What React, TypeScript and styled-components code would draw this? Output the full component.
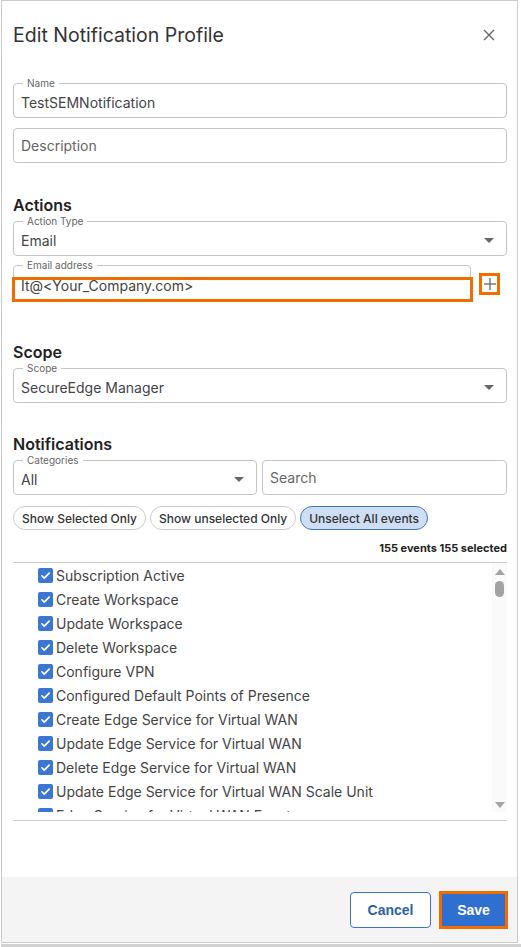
import React from 'react';
import styled, { createGlobalStyle } from 'styled-components';

const GlobalStyle = createGlobalStyle`
  * { box-sizing: border-box; }
  body {
    margin: 0;
    background: #fff;
    font-family: Inter, "Noto Sans", sans-serif;
    color: #333;
  }
`;

const Page = styled.div`
  width: 521px;
  padding-left: 1px;
`;

const Panel = styled.div`
  width: 517px;
  height: 943px;
  border: 1px solid #cbcbcb;
  display: flex;
  flex-direction: column;
  background: #fff;
`;

const BottomStrip = styled.div`
  margin-top: 1px;
  height: 3px;
  width: 520px;
  background: #d2d2d2;
`;

const Body = styled.div`
  flex: 1;
  padding: 0 10px 0 11px;
  display: flex;
  flex-direction: column;
`;

const Header = styled.div`
  display: flex;
  align-items: center;
  justify-content: space-between;
  padding-top: 22px;
  height: 46px;
`;

const Title = styled.h1`
  margin: 0;
  font-size: 19.5px;
  line-height: 24px;
  font-weight: 400;
  color: #333;
`;

const CloseButton = styled.button`
  width: 24px;
  height: 24px;
  margin-right: 6px;
  border: none;
  background: none;
  padding: 0;
  display: flex;
  align-items: center;
  justify-content: center;
  color: #666;
`;

const Fieldset = styled.fieldset<{ $mt?: number; $grow?: boolean; $width?: string }>`
  position: relative;
  margin: ${({ $mt }) => $mt ?? 0}px 0 0;
  padding: 0 7px;
  border: 1px solid #c4c4c4;
  border-radius: 4px;
  min-width: 0;
  display: flex;
  align-items: center;
  flex: ${({ $grow, $width }) => ($width ? `0 0 ${$width}` : $grow ? '1 1 0' : '0 0 auto')};
`;

const Legend = styled.legend`
  margin-left: 2px;
  padding: 0 4px;
  font-size: 10px;
  line-height: 10px;
  color: #666;
`;

const Input = styled.input<{ $h?: number }>`
  flex: 1;
  min-width: 0;
  height: ${({ $h }) => $h ?? 29}px;
  border: none;
  outline: none;
  padding: 0;
  background: transparent;
  font-family: inherit;
  font-size: 14px;
  color: #444;
  &::placeholder { color: #666; }
`;

const PlainBox = styled.div<{ $mt?: number; $grow?: boolean }>`
  margin-top: ${({ $mt }) => $mt ?? 0}px;
  height: 35px;
  flex: ${({ $grow }) => ($grow ? '1 1 0' : '0 0 auto')};
  border: 1px solid #c4c4c4;
  border-radius: 4px;
  padding: 0 7px;
  display: flex;
  align-items: center;
`;

const Caret = styled.span`
  width: 0;
  height: 0;
  margin-right: 5px;
  border-left: 5px solid transparent;
  border-right: 5px solid transparent;
  border-top: 5px solid #666;
`;

const SectionTitle = styled.h2<{ $mt: number }>`
  margin: ${({ $mt }) => $mt}px 0 0;
  font-size: 16px;
  line-height: 22px;
  font-weight: 600;
  color: #222;
`;

const Row = styled.div<{ $mt?: number; $gap?: number }>`
  display: flex;
  align-items: flex-end;
  gap: ${({ $gap }) => $gap ?? 0}px;
  margin-top: ${({ $mt }) => $mt ?? 0}px;
`;

const Highlight = styled.span`
  position: absolute;
  left: -2px;
  right: -3px;
  top: 7px;
  bottom: -2px;
  border: 3px solid #f36c00;
  pointer-events: none;
`;

const PlusButton = styled.button`
  width: 21px;
  height: 22px;
  margin: 0 7px 6px 8px;
  padding: 0;
  border: 3px solid #f36c00;
  background: #fff;
  display: flex;
  align-items: center;
  justify-content: center;
  color: #777;
`;

const ChipRow = styled.div`
  display: flex;
  gap: 4px;
  margin-top: 11px;
`;

const Chip = styled.button<{ $active?: boolean }>`
  height: 24px;
  padding: 0 8px;
  border-radius: 12px;
  border: 1px solid ${({ $active }) => ($active ? '#3f78c9' : '#cdcdcd')};
  background: ${({ $active }) => ($active ? '#cddef5' : '#fff')};
  font-family: inherit;
  font-size: 12px;
  font-weight: 500;
  color: #333;
  white-space: nowrap;
`;

const Count = styled.div`
  margin-top: 11px;
  text-align: right;
  font-size: 11px;
  line-height: 14px;
  font-weight: 700;
  color: #222;
`;

const ListBox = styled.div`
  margin-top: 7px;
  border-top: 1px solid #cccccc;
  border-bottom: 1px solid #cccccc;
  padding-bottom: 8px;
  display: flex;
`;

const ListScroll = styled.div`
  flex: 1;
  height: 249px;
  overflow: hidden;
  padding-left: 25px;
`;

const Item = styled.label`
  display: flex;
  align-items: center;
  height: 24px;
  font-size: 14px;
  color: #444;
  white-space: nowrap;
`;

const Check = styled.span`
  width: 15px;
  height: 15px;
  margin-right: 3px;
  border-radius: 2px;
  background: #3a76d2;
  display: flex;
  align-items: center;
  justify-content: center;
  flex: none;
`;

const ScrollTrack = styled.div`
  width: 15px;
  height: 249px;
  background: #fafafa;
  display: flex;
  flex-direction: column;
  align-items: center;
  padding: 6px 0 4px;
`;

const Thumb = styled.div`
  width: 9px;
  height: 16px;
  margin-top: 6px;
  border-radius: 5px;
  background: #a3a3a3;
`;

const TrackSpacer = styled.div`
  flex: 1;
`;

const Arrow = styled.span<{ $down?: boolean }>`
  width: 0;
  height: 0;
  border-left: 5px solid transparent;
  border-right: 5px solid transparent;
  ${({ $down }) =>
    $down ? 'border-top: 6px solid #a3a3a3;' : 'border-bottom: 6px solid #a3a3a3;'}
`;

const Footer = styled.div`
  height: 65px;
  background: #f4f4f4;
  display: flex;
  align-items: center;
  justify-content: flex-end;
  gap: 8px;
  padding-right: 9px;
`;

const CancelButton = styled.button`
  width: 81px;
  height: 36px;
  border: 1px solid #3a73c9;
  border-radius: 4px;
  background: #fff;
  font-family: "Liberation Sans", Arial, sans-serif;
  font-size: 14px;
  font-weight: 700;
  color: #2f5fa6;
`;

const SaveButton = styled.button`
  width: 69px;
  height: 38px;
  border: 3px solid #f36c00;
  background: #2f6fcf;
  font-family: "Liberation Sans", Arial, sans-serif;
  font-size: 14px;
  font-weight: 700;
  color: #fff;
`;

const events = [
  'Subscription Active',
  'Create Workspace',
  'Update Workspace',
  'Delete Workspace',
  'Configure VPN',
  'Configured Default Points of Presence',
  'Create Edge Service for Virtual WAN',
  'Update Edge Service for Virtual WAN',
  'Delete Edge Service for Virtual WAN',
  'Update Edge Service for Virtual WAN Scale Unit',
  'Edge Service for Virtual WAN Event',
  'Create Site',
];

const CheckIcon = () => (
  <svg width="11" height="11" viewBox="0 0 12 12" fill="none">
    <path d="M2 6.3l2.6 2.6L10 3.4" stroke="#fff" strokeWidth="1.8" strokeLinecap="round" strokeLinejoin="round" />
  </svg>
);

const App: React.FC = () => {
  return (
    <Page>
      <GlobalStyle />
      <Panel>
        <Body>
          <Header>
            <Title>Edit Notification Profile</Title>
            <CloseButton aria-label="Close">
              <svg width="12" height="12" viewBox="0 0 12 12">
                <path d="M1 1l10 10M11 1L1 11" stroke="#666" strokeWidth="1.4" />
              </svg>
            </CloseButton>
          </Header>

          <Fieldset $mt={31}>
            <Legend>Name</Legend>
            <Input defaultValue="TestSEMNotification" />
          </Fieldset>
          <PlainBox $mt={10}>
            <Input placeholder="Description" />
          </PlainBox>

          <SectionTitle $mt={31}>Actions</SectionTitle>
          <Fieldset>
            <Legend>Action Type</Legend>
            <Input defaultValue="Email" readOnly />
            <Caret />
          </Fieldset>
          <Row $mt={4}>
            <Fieldset $grow>
              <Legend>Email address</Legend>
              <Input $h={30} defaultValue="It@<Your_Company.com>" />
              <Highlight />
            </Fieldset>
            <PlusButton aria-label="Add email">
              <svg width="12" height="12" viewBox="0 0 12 12">
                <path d="M6 0v12M0 6h12" stroke="#7a7a7a" strokeWidth="1.5" />
              </svg>
            </PlusButton>
          </Row>

          <SectionTitle $mt={40}>Scope</SectionTitle>
          <Fieldset>
            <Legend>Scope</Legend>
            <Input defaultValue="SecureEdge Manager" readOnly />
            <Caret />
          </Fieldset>

          <SectionTitle $mt={30}>Notifications</SectionTitle>
          <Row $gap={5}>
            <Fieldset $width="244px">
              <Legend>Categories</Legend>
              <Input defaultValue="All" readOnly />
              <Caret />
            </Fieldset>
            <PlainBox $grow>
              <Input placeholder="Search" />
            </PlainBox>
          </Row>
          <ChipRow>
            <Chip>Show Selected Only</Chip>
            <Chip>Show unselected Only</Chip>
            <Chip $active>Unselect All events</Chip>
          </ChipRow>
          <Count>155 events 155 selected</Count>

          <ListBox>
            <ListScroll>
              {events.map((name) => (
                <Item key={name}>
                  <Check>
                    <CheckIcon />
                  </Check>
                  {name}
                </Item>
              ))}
            </ListScroll>
            <ScrollTrack>
              <Arrow />
              <Thumb />
              <TrackSpacer />
              <Arrow $down />
            </ScrollTrack>
          </ListBox>
        </Body>
        <Footer>
          <CancelButton>Cancel</CancelButton>
          <SaveButton>Save</SaveButton>
        </Footer>
      </Panel>
      <BottomStrip />
    </Page>
  );
};

export default App;
